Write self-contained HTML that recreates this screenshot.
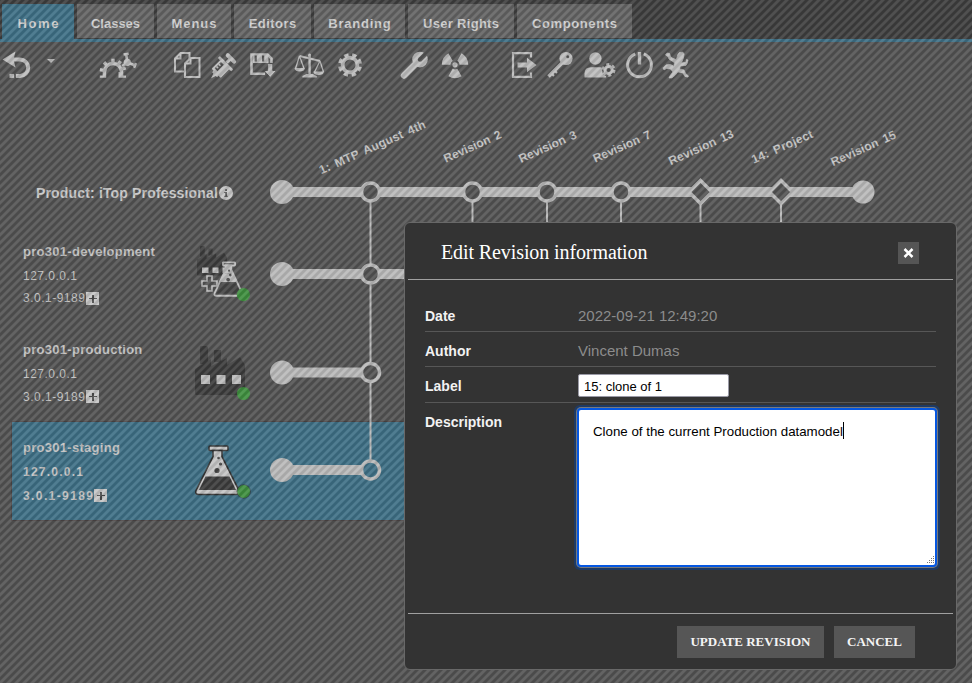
<!DOCTYPE html>
<html><head><meta charset="utf-8">
<style>
*{box-sizing:border-box;margin:0;padding:0}
html,body{width:972px;height:683px;overflow:hidden}
body{position:relative;font-family:"Liberation Sans",sans-serif;background:#535353}
.a{position:absolute;white-space:nowrap;line-height:1}
#topbar{position:absolute;left:0;top:0;width:972px;height:39px;background:#3e3e3e}
#blueline{position:absolute;left:0;top:39px;width:972px;height:3px;background:#3e7086}
.tab{position:absolute;top:4px;height:34px;font-weight:bold;font-size:13px;color:#cfcfcf;text-align:center;line-height:40px;background:#636363}
.tab.on{height:38px;background:#3e7086}
#overlay{position:absolute;left:0;top:0;width:972px;height:683px;
background:linear-gradient(135deg,rgba(0,0,0,.094) 0%,rgba(0,0,0,.094) 8%,rgba(255,255,255,.094) 17%,rgba(255,255,255,.094) 33%,rgba(0,0,0,.094) 42%,rgba(0,0,0,.094) 58%,rgba(255,255,255,.094) 67%,rgba(255,255,255,.094) 83%,rgba(0,0,0,.094) 92%,rgba(0,0,0,.094) 100%);background-size:8px 8px;background-position:7px 0}
.env{position:absolute;left:23px;color:#c2c2c2;white-space:nowrap;line-height:1}
.env .n{position:absolute;left:0;font-weight:bold;font-size:13px;letter-spacing:0.28px}
.env .i{position:absolute;left:0;font-size:12px;letter-spacing:0.5px}
.plus{position:absolute;width:13px;height:13px;background:#c6c6c6}
.plus:before{content:"";position:absolute;left:6px;top:2.5px;width:1.6px;height:8px;background:#4a4a4a}
.plus:after{content:"";position:absolute;left:2.8px;top:5.7px;width:8px;height:1.6px;background:#4a4a4a}
#dlg{position:absolute;left:404px;top:222px;width:553px;height:448px;background:#333;border:1px solid #686868;border-radius:6px}
.sep{position:absolute;height:1px;background:#a0a0a0}
.rsep{position:absolute;height:1px;background:#575757}
.lbl{position:absolute;font-weight:bold;font-size:14px;color:#f2f2f2;line-height:1;white-space:nowrap}
.val{position:absolute;font-size:15px;color:#8c8c8c;line-height:1;white-space:nowrap}
.btn{position:absolute;top:626px;height:32px;background:#565656;color:#f4f4f4;font-family:"Liberation Serif",serif;font-weight:bold;font-size:13px;text-align:center;line-height:32px}
</style></head><body>
<div id="topbar"></div>
<div id="blueline"></div>
<div class="tab on" style="left:2px;width:72px;letter-spacing:1.7px;text-indent:1.7px">Home</div>
<div class="tab" style="left:77px;width:77px">Classes</div>
<div class="tab" style="left:157px;width:74px;letter-spacing:0.9px;text-indent:0.9px">Menus</div>
<div class="tab" style="left:234px;width:77px;letter-spacing:0.45px;text-indent:0.45px">Editors</div>
<div class="tab" style="left:314px;width:91px;letter-spacing:0.75px;text-indent:0.75px">Branding</div>
<div class="tab" style="left:408px;width:106px;letter-spacing:0.3px;text-indent:0.3px">User Rights</div>
<div class="tab" style="left:517px;width:115px;letter-spacing:0.6px;text-indent:0.6px">Components</div>

<!-- staging highlight -->
<div class="a" style="left:12px;top:422px;width:420px;height:98px;background:#3e7086;box-shadow:0 0 0 1px rgba(60,40,40,.35)"></div>

<!-- product header -->
<div class="a" style="left:36px;top:186px;font-weight:bold;font-size:14px;color:#c9c9c9;letter-spacing:0.16px">Product: iTop Professional</div>
<svg class="a" style="left:218px;top:185px" width="16" height="16" viewBox="0 0 16 16"><circle cx="8" cy="8" r="7" fill="#c4c4c4"/><rect x="7.2" y="7" width="1.8" height="4.6" fill="#555"/><rect x="6.2" y="7" width="2" height="1" fill="#555"/><rect x="6.2" y="10.8" width="3.6" height="1" fill="#555"/><rect x="7.2" y="4.2" width="1.8" height="1.8" fill="#555"/></svg>

<!-- env rows -->
<div class="env" style="top:0">
 <div class="n" style="top:245px">pro301-development</div>
 <div class="i" style="top:270px">127.0.0.1</div>
 <div class="i" style="top:292px">3.0.1-9189</div>
</div>
<div class="plus" style="left:86px;top:292px"></div>
<div class="env" style="top:0">
 <div class="n" style="top:343px">pro301-production</div>
 <div class="i" style="top:368px">127.0.0.1</div>
 <div class="i" style="top:391px">3.0.1-9189</div>
</div>
<div class="plus" style="left:86px;top:390px"></div>
<div class="env" style="top:0">
 <div class="n" style="top:441px">pro301-staging</div>
 <div class="i" style="top:466px;font-weight:bold;letter-spacing:1.25px">127.0.0.1</div>
 <div class="i" style="top:490px;font-weight:bold;letter-spacing:1.4px">3.0.1-9189</div>
</div>
<div class="plus" style="left:94px;top:489px"></div>


<!-- env icons -->
<svg class="a" style="left:0;top:0" width="972" height="683" viewBox="0 0 972 683">
 <defs>
  <g id="fac">
   <path d="M1 49 Q0 49 0 47 V23 L16 13 V20 L32 12 V19 L45 11 L50 19 V47 Q50 49 48 49 Z M5 1 Q5 0 7 0 H11 Q13 0 13 2 V18 H5 Z M19 4 H26 V16 H19 Z" fill="#000" fill-opacity="0.27"/>
  </g>
  <g id="flask">
   <rect x="14" y="0.5" width="19" height="4.5" rx="1"/>
   <path d="M18 5 H27 V11 L44 45 Q45.5 49 41 49 H4 Q-0.5 49 1 45 L18 11 Z"/>
  </g>
 </defs>
 <!-- dev -->
 <use href="#fac" transform="translate(197,246) scale(0.6,0.6)"/>
 <rect x="202" y="267.5" width="6.5" height="5.5" fill="#bdbdbd"/>
 <rect x="212.5" y="267.5" width="6" height="5.5" fill="#bdbdbd"/>
 <rect x="222.5" y="267.5" width="2.5" height="5.5" fill="#bdbdbd"/>
 <path d="M207 276 H212 V281 H217 V286 H212 V291 H207 V286 H202 V281 H207 Z" fill="none" stroke="#bdbdbd" stroke-width="1.6"/>
 <g transform="translate(214,262) scale(0.64,0.69)">
  <use href="#flask" fill="#535353" stroke="#bdbdbd" stroke-width="2.8"/>
  <path d="M18 5 H27 V11 L30 17 L15 17 L18 11 Z" fill="#bdbdbd"/>
  <path d="M10.5 31 H34.5 L40 43 Q41 45.5 38 45.5 H7 Q4 45.5 5 43 Z" fill="#444"/>
  <circle cx="23.5" cy="12.5" r="1.6" fill="#444"/>
 </g>
 <g transform="translate(214,262) scale(0.64,0.69)" fill="#bdbdbd">
  <path d="M15 17 H30 L36 29 H9 Z"/>
  <circle cx="25.5" cy="19" r="1.9" fill="#444"/>
  <circle cx="22" cy="25.5" r="2.8" fill="#444"/>
 </g>
 <circle cx="243.4" cy="294.7" r="6.6" fill="#3f8f3f"/>
 <!-- production -->
 <use href="#fac" transform="translate(195,346)"/>
 <rect x="201" y="375" width="9" height="9" fill="#bdbdbd"/>
 <rect x="216.5" y="375" width="9" height="9" fill="#bdbdbd"/>
 <rect x="232" y="375" width="9" height="9" fill="#bdbdbd"/>
 <circle cx="243.5" cy="393.5" r="6.6" fill="#3f8f3f"/>
 <!-- staging -->
 <g transform="translate(195,445.5)">
  <use href="#flask" fill="#c4c4c4" stroke="#333" stroke-width="1.6"/>
  <path d="M10.5 31 H34.5 L41 44.5 H4 Z" fill="#3c3c3c"/>
  <circle cx="23.5" cy="12.5" r="1.3" fill="#444"/>
  <circle cx="25.5" cy="18.5" r="1.6" fill="#444"/>
  <circle cx="22" cy="25" r="2.6" fill="#444"/>
 </g>
 <circle cx="243.7" cy="491.5" r="7.2" fill="#333" fill-opacity="0.6"/>
 <circle cx="243.7" cy="491.5" r="6.4" fill="#3f8f3f"/>
</svg>

<!-- timeline -->
<svg class="a" style="left:0;top:0" width="972" height="683" viewBox="0 0 972 683">
 <g stroke="#b9b9b9" fill="none">
  <line x1="370.5" y1="192" x2="370.5" y2="470" stroke-width="2"/>
  <line x1="472.5" y1="192" x2="472.5" y2="240" stroke-width="2"/>
  <line x1="547" y1="192" x2="547" y2="240" stroke-width="2"/>
  <line x1="621" y1="192" x2="621" y2="240" stroke-width="2"/>
  <line x1="700.5" y1="192" x2="700.5" y2="240" stroke-width="2"/>
  <line x1="781" y1="192" x2="781" y2="240" stroke-width="2"/>
  <line x1="282" y1="192" x2="863" y2="192" stroke-width="10"/>
  <line x1="282" y1="274" x2="440" y2="274" stroke-width="10"/>
  <line x1="282" y1="372.5" x2="370" y2="372.5" stroke-width="10"/>
  <line x1="282" y1="470" x2="370" y2="470" stroke-width="10"/>
 </g>
 <g fill="#b9b9b9">
  <circle cx="282" cy="192" r="12"/>
  <circle cx="863" cy="192" r="11.5"/>
  <circle cx="282" cy="274" r="12"/>
  <circle cx="282" cy="372.5" r="12"/>
  <circle cx="282" cy="470" r="12"/>
 </g>
 <g stroke="#b9b9b9" stroke-width="3.5">
  <circle cx="370.5" cy="192" r="9" fill="#535353"/>
  <circle cx="472.5" cy="192" r="9" fill="#535353"/>
  <circle cx="547" cy="192" r="9" fill="#535353"/>
  <circle cx="621" cy="192" r="9" fill="#535353"/>
  <circle cx="370.5" cy="274" r="9" fill="#535353"/>
  <circle cx="370.5" cy="372.5" r="9" fill="#535353"/>
  <circle cx="370.5" cy="470" r="9" fill="#3e7086"/>
  <path d="M700.5 180.5 L712 192 L700.5 203.5 L689 192Z" fill="#535353"/>
  <path d="M781 180.5 L792.5 192 L781 203.5 L769.5 192Z" fill="#535353"/>
 </g>
 <g font-family="Liberation Sans" font-weight="bold" font-size="12" fill="#c4c4c4" text-anchor="middle" word-spacing="2">
  <text transform="translate(373.9,150.9) rotate(-24)" textLength="115.2" lengthAdjust="spacing">1: MTP August 4th</text>
  <text transform="translate(474.1,150.1) rotate(-24)" textLength="62.1" lengthAdjust="spacing">Revision 2</text>
  <text transform="translate(549.3,150.3) rotate(-24)" textLength="62.1" lengthAdjust="spacing">Revision 3</text>
  <text transform="translate(623.5,150.2) rotate(-24)" textLength="62.1" lengthAdjust="spacing">Revision 7</text>
  <text transform="translate(702.7,151) rotate(-24)" textLength="70" lengthAdjust="spacing">Revision 13</text>
  <text transform="translate(783.8,150.4) rotate(-24)" textLength="65.9" lengthAdjust="spacing">14: Project</text>
  <text transform="translate(865,152) rotate(-24)" textLength="70" lengthAdjust="spacing">Revision 15</text>
 </g>
</svg>

<svg class="a" style="left:0;top:0" width="972" height="90" viewBox="0 0 972 90">
 <g fill="#bdbdbd" stroke="none">
  <!-- undo -->
  <path d="M2.5 59.5 L15.5 51.5 L13.5 59.5 L15.5 67.5 Z"/>
  <path d="M12 59.5 H20 A8.2 8.2 0 0 1 20 75.9 H16" fill="none" stroke="#bdbdbd" stroke-width="4"/>
  <rect x="9.5" y="73.9" width="4.5" height="4"/>
  <path d="M47 59 H55 L51 63 Z"/>
  <!-- half gear + small gear -->
  <circle cx="127.3" cy="62.3" r="3.6"/>
  <rect x="-1.3" y="-9" width="2.6" height="9" transform="translate(127.3,62.3) rotate(-8)"/><rect x="-2.6" y="-9.5" width="5.2" height="2.4" transform="translate(127.3,62.3) rotate(-8)"/><rect x="-1.3" y="-9" width="2.6" height="9" transform="translate(127.3,62.3) rotate(112)"/><rect x="-2.6" y="-9.5" width="5.2" height="2.4" transform="translate(127.3,62.3) rotate(112)"/><rect x="-1.3" y="-9" width="2.6" height="9" transform="translate(127.3,62.3) rotate(232)"/><rect x="-2.6" y="-9.5" width="5.2" height="2.4" transform="translate(127.3,62.3) rotate(232)"/>
  <g stroke="#535353" stroke-width="1.4" paint-order="stroke">
  <path d="M102.7 72 A10.3 10.3 0 0 1 123.3 72 V75.5 H126 V77.8 H118.5 V72 L119.8 72 A6.8 6.8 0 0 0 106.2 72 V77.8 H99.8 V75.5 H102.7 Z"/>
  </g>
  <rect x="-1.7" y="-13.3" width="3.4" height="3.6" transform="translate(113,72) rotate(-80)"/><rect x="-1.7" y="-13.3" width="3.4" height="3.6" transform="translate(113,72) rotate(-43)"/><rect x="-1.7" y="-13.3" width="3.4" height="3.6" transform="translate(113,72) rotate(0)"/><rect x="-1.7" y="-13.3" width="3.4" height="3.6" transform="translate(113,72) rotate(35)"/><rect x="-1.7" y="-13.3" width="3.4" height="3.6" transform="translate(113,72) rotate(72)"/>
  <!-- copy -->
  <g fill="none" stroke="#bdbdbd" stroke-width="2">
   <path d="M180.5 53 H189.5 V71.5 H175 V58.5 Z M175 58.5 H180.5 V53"/>
  </g>
  <path d="M190.5 58 H199.5 V77 H185 V63.5 Z" fill="#535353" stroke="#bdbdbd" stroke-width="2"/>
  <path d="M185 63.5 H190.5 V58" fill="none" stroke="#bdbdbd" stroke-width="2"/>
  <!-- syringe -->
  <g transform="translate(222.4,66.9) rotate(-45)">
   <path d="M-16 0 L-10 -2 L-10 2 Z"/>
   <rect x="-11" y="-3.5" width="3" height="7"/>
   <rect x="-9" y="-6.5" width="13" height="13" rx="1"/>
   <rect x="-6.5" y="-4.5" width="9" height="4" fill="#535353"/>
   <rect x="-4.6" y="-4.5" width="1.5" height="2.4"/>
   <rect x="-1.4" y="-4.5" width="1.5" height="2.4"/>
   <rect x="3" y="-9.5" width="3" height="19" rx="1"/>
   <rect x="6" y="-1.6" width="5" height="3.2"/>
   <rect x="10" y="-6.5" width="4" height="13" rx="2"/>
  </g>
  <!-- save -->
  <path d="M271.5 63 V58.5 L267.5 54.5 H251.5 V73.8 H265" fill="none" stroke="#bdbdbd" stroke-width="2.6"/>
  <rect x="253" y="54" width="15.5" height="9"/>
  <rect x="254.6" y="55.5" width="2.2" height="6" fill="#535353"/>
  <rect x="262" y="55.5" width="2.2" height="6" fill="#535353"/>
  <path d="M267.6 63.5 H272.8 V70.5 H276.6 L270.2 77.5 L263.8 70.5 H267.6 Z" stroke="#535353" stroke-width="1"/>
  <!-- scales -->
  <rect x="308.4" y="55" width="2.4" height="21"/>
  <path d="M306.5 74 H312.7 L316.8 76 V77.6 H302.4 V76 Z"/>
  <circle cx="309.6" cy="55" r="1.5"/>
  <path d="M299.5 56 L320 61" stroke="#bdbdbd" stroke-width="2" fill="none"/>
  <path d="M299.5 56 L295.5 68.5 M299.5 56 L304 68.5 M320 61 L314.5 72 M320 61 L323.5 72" stroke="#bdbdbd" stroke-width="1.3" fill="none"/>
  <path d="M294.5 68 H305 Q304.5 71.5 299.7 71.5 Q295 71.5 294.5 68 Z"/>
  <path d="M313.3 71.5 H324 Q323.5 75 318.6 75 Q313.8 75 313.3 71.5 Z"/>
  <!-- gear -->
  <circle cx="350" cy="65" r="7.4" fill="none" stroke="#bdbdbd" stroke-width="3.8"/>
  <circle cx="350" cy="65" r="10.4" fill="none" stroke="#bdbdbd" stroke-width="3.2" stroke-dasharray="4.4 3.77" stroke-dashoffset="-1.88"/>
  <!-- wrench -->
  <path d="M404 75.5 L416 63.5" stroke="#bdbdbd" stroke-width="6.4" stroke-linecap="round"/>
  <circle cx="420" cy="59.6" r="7.8"/>
  <path d="M420 59.6 L430 49.6" stroke="#535353" stroke-width="4.4"/>
  <circle cx="420" cy="59.6" r="2.2" fill="#535353"/>
  <!-- radiation -->
  <circle cx="455" cy="64.8" r="2.6"/>
  <path d="M457.30 60.82 L461.60 53.37 A13.2 13.2 0 0 1 468.20 64.80 L459.60 64.80 A4.6 4.6 0 0 0 457.30 60.82 Z M450.40 64.80 L441.80 64.80 A13.2 13.2 0 0 1 448.40 53.37 L452.70 60.82 A4.6 4.6 0 0 0 450.40 64.80 Z M457.30 68.78 L461.60 76.23 A13.2 13.2 0 0 1 448.40 76.23 L452.70 68.78 A4.6 4.6 0 0 0 457.30 68.78 Z"/>
  <!-- export -->
  <path d="M531 57.5 V53.2 H513 V76.8 H531 V72.5" fill="none" stroke="#bdbdbd" stroke-width="2.2"/>
  <path d="M517.5 62.5 H527 V57.8 L536.5 65 L527 72.2 V67.5 H517.5 Z"/>
  <!-- key -->
  <circle cx="566" cy="58.5" r="6.6"/>
  <circle cx="567.8" cy="56.7" r="1.5" fill="#535353"/>
  <path d="M562 63 L548.5 76.5" stroke="#bdbdbd" stroke-width="3.6"/>
  <path d="M551.5 73.5 L554 76 M554.5 70.5 L557 73" stroke="#bdbdbd" stroke-width="2"/>
  <!-- user gear -->
  <circle cx="595.4" cy="58.5" r="6.2"/>
  <path d="M584.5 77.5 V73.5 Q584.5 67.2 591 67.2 H600 Q606 67.2 606 73.5 V77.5 Z"/>
  <circle cx="608.6" cy="70" r="6.6" fill="#535353"/>
  <circle cx="608.6" cy="70" r="3.6" fill="none" stroke="#bdbdbd" stroke-width="3"/>
  <circle cx="608.6" cy="70" r="5.6" fill="none" stroke="#bdbdbd" stroke-width="2.6" stroke-dasharray="2.9 2.96"/>
  <!-- power -->
  <path d="M635.2 53.8 A11.9 11.9 0 1 0 643.8 53.8" fill="none" stroke="#bdbdbd" stroke-width="3"/>
  <rect x="637.8" y="52" width="3.4" height="12.5"/>
  <!-- lizard -->
  <path d="M679.4 52.5 L682.9 52.2 L684.1 54.0 L683.4 58.0 L681.4 62.9 L685.9 62.4 L686.6 59.5 L687.9 60.0 L687.4 62.9 L685.9 65.4 L680.4 65.9 L679.4 68.9 L683.9 69.9 L685.9 73.9 L688.4 75.9 L687.9 77.1 L684.9 76.4 L682.9 72.9 L677.9 71.9 L675.4 74.9 L671.9 77.9 L669.0 77.9 L670.0 75.9 L672.9 71.9 L670.5 68.9 L666.5 68.4 L664.0 69.9 L663.0 67.9 L666.0 64.9 L670.5 64.4 L673.9 66.4 L674.9 62.9 L671.9 60.9 L669.0 59.0 L668.0 56.5 L665.5 55.0 L667.0 53.0 L669.5 53.5 L670.5 56.5 L672.9 58.5 L676.4 59.5 L677.9 54.5 Z" stroke="#bdbdbd" stroke-width="0.8" stroke-linejoin="round"/>
 </g>
</svg>

<div id="overlay"></div>

<!-- dialog -->
<div id="dlg"></div>
<div class="a" style="left:441px;top:242px;font-family:'Liberation Serif',serif;font-size:20px;color:#fff;letter-spacing:-0.1px">Edit Revision information</div>
<div class="a" style="left:898px;top:242px;width:21px;height:22px;background:#555"></div>
<svg class="a" style="left:898px;top:242px" width="21" height="22" viewBox="0 0 21 22"><path d="M6.5 7 L14.5 15 M14.5 7 L6.5 15" stroke="#fff" stroke-width="2.5"/></svg>
<div class="sep" style="left:408px;top:279px;width:545px"></div>
<div class="lbl" style="left:425px;top:309px">Date</div>
<div class="val" style="left:578px;top:308px">2022-09-21 12:49:20</div>
<div class="rsep" style="left:425px;top:331px;width:511px"></div>
<div class="lbl" style="left:425px;top:344px">Author</div>
<div class="val" style="left:578px;top:343px">Vincent Dumas</div>
<div class="rsep" style="left:425px;top:366px;width:511px"></div>
<div class="lbl" style="left:425px;top:379px">Label</div>
<div class="a" style="left:578px;top:374px;width:151px;height:23px;background:#fff;border:1px solid #9a9aa6;border-radius:2px"></div>
<div class="a" style="left:584px;top:380px;font-size:13px;color:#000">15: clone of 1</div>
<div class="rsep" style="left:425px;top:402px;width:511px"></div>
<div class="lbl" style="left:425px;top:415px">Description</div>
<div class="a" style="left:574px;top:405px;width:366px;height:165px;background:#1e3a64;border-radius:6px"></div>
<div class="a" style="left:576px;top:407px;width:362px;height:161px;background:#7a7a7a;border-radius:5px"></div>
<div class="a" style="left:577px;top:408px;width:360px;height:159px;background:#0557e2;border-radius:4px"></div>
<div class="a" style="left:579px;top:410px;width:356px;height:155px;background:#fff;border-radius:2px"></div>
<div class="a" style="left:593px;top:425px;font-size:13.3px;color:#000">Clone of the current Production datamodel</div>
<div class="a" style="left:843px;top:422px;width:1px;height:17px;background:#000"></div>
<svg class="a" style="left:925px;top:555px" width="10" height="10" viewBox="0 0 10 10"><g fill="#777"><rect x="8" y="1" width="1" height="1"/><rect x="6" y="3" width="1" height="1"/><rect x="8" y="3" width="1" height="1"/><rect x="4" y="5" width="1" height="1"/><rect x="6" y="5" width="1" height="1"/><rect x="8" y="5" width="1" height="1"/><rect x="2" y="7" width="1" height="1"/><rect x="4" y="7" width="1" height="1"/><rect x="6" y="7" width="1" height="1"/><rect x="8" y="7" width="1" height="1"/></g></svg>
<div class="sep" style="left:408px;top:613px;width:545px"></div>
<div class="btn" style="left:677px;width:147px">UPDATE REVISION</div>
<div class="btn" style="left:834px;width:81px">CANCEL</div>
</body></html>
